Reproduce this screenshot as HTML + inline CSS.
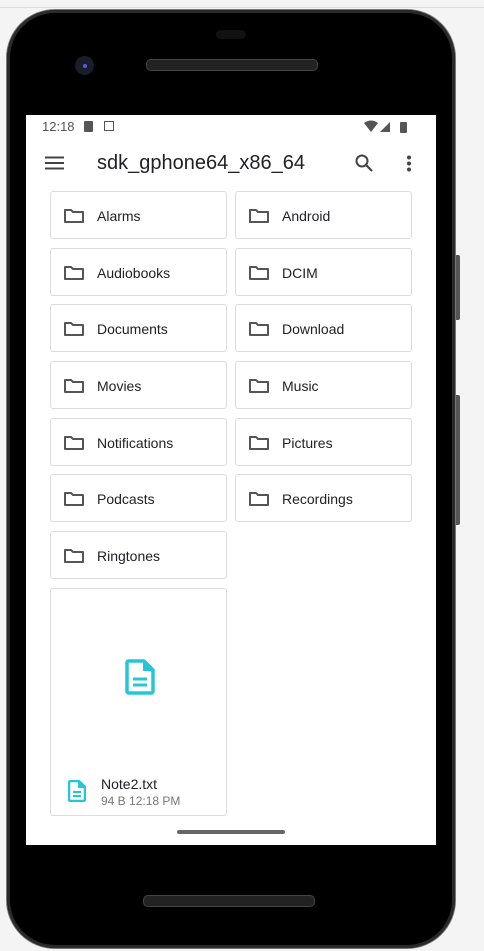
<!DOCTYPE html>
<html><head><style>
body{margin:0;width:484px;height:951px;background:#f4f4f4;position:relative;overflow:hidden;font-family:"Liberation Sans",sans-serif}
.abs{position:absolute}
.phone{left:7px;top:10px;width:448px;height:938px;background:#000;border-radius:48px;box-shadow:0 0 0 3px #2a2a2a inset, 0 0 0 1px #777}
.screen{left:26px;top:115px;width:410px;height:730px;background:#fff}
.card{position:absolute;width:175px;height:46px;border:1px solid #dcdcdc;border-radius:3px;background:#fff}
.card span{position:absolute;left:46px;top:16px;font-size:14px;color:#202124}
.card svg{position:absolute;left:13px;top:16px}
</style></head><body>
<div class="abs" style="left:0;top:0;width:484px;height:7px;border-bottom:1px solid #ddd;background:#f4f4f4"></div>
<div class="abs" style="left:454px;top:255px;width:6px;height:65px;background:#555;border-radius:2px"></div>
<div class="abs" style="left:454px;top:395px;width:6px;height:130px;background:#555;border-radius:2px"></div>
<div class="abs phone"></div>
<div class="abs" style="left:216px;top:30px;width:30px;height:9px;background:#111;border-radius:5px"></div>
<div class="abs" style="left:75px;top:56px;width:19px;height:19px;background:#1a1d2a;border-radius:50%"></div>
<div class="abs" style="left:83px;top:64px;width:4px;height:4px;background:#5060d0;border-radius:50%"></div>
<div class="abs" style="left:146px;top:59px;width:170px;height:10px;background:#222;border:1px solid #444;border-radius:5px"></div>
<div class="abs" style="left:143px;top:895px;width:170px;height:10px;background:#222;border:1px solid #444;border-radius:5px"></div>
<div class="abs screen"></div>
<div class="abs" style="left:42px;top:119px;font-size:13px;color:#555">12:18</div>
<div class="abs" style="left:84px;top:121px;width:9px;height:11px;background:#555;border-radius:1px"></div>
<div class="abs" style="left:104px;top:121px;width:10px;height:10px;border:1.5px solid #555;box-sizing:border-box"></div>
<svg class="abs" style="left:364px;top:120px" width="48" height="14"><path d="M0 3 Q7 -2 14 3 L7 12Z" fill="#555"/><path d="M16 12 L26 2 L26 12Z" fill="#555"/><rect x="36" y="2" width="7" height="11" fill="#555" rx="1"/></svg>
<svg class="abs" style="left:45px;top:156px" width="19" height="14"><path d="M0 1.5H19M0 7H19M0 12.5H19" stroke="#444" stroke-width="2"/></svg>
<div class="abs" style="left:97px;top:152px;font-size:20px;color:#202124">sdk_gphone64_x86_64</div>
<svg class="abs" style="left:354px;top:153px" width="20" height="20"><circle cx="8" cy="8" r="5.5" stroke="#444" stroke-width="2" fill="none"/><path d="M12 12L18 18" stroke="#444" stroke-width="2.2"/></svg>
<svg class="abs" style="left:406px;top:155px" width="6" height="18"><circle cx="3" cy="2.5" r="2" fill="#444"/><circle cx="3" cy="8.5" r="2" fill="#444"/><circle cx="3" cy="14.5" r="2" fill="#444"/></svg>

<div class="abs" style="left:0;top:0">
<div class="card" style="left:50px;top:191px"><svg width="20" height="16"><path d="M1 2V14H19V4H9L7 2Z" fill="none" stroke="#555" stroke-width="2" stroke-linejoin="round"/></svg><span>Alarms</span></div>
<div class="card" style="left:235px;top:191px"><svg width="20" height="16"><path d="M1 2V14H19V4H9L7 2Z" fill="none" stroke="#555" stroke-width="2" stroke-linejoin="round"/></svg><span>Android</span></div>
<div class="card" style="left:50px;top:248px"><svg width="20" height="16"><path d="M1 2V14H19V4H9L7 2Z" fill="none" stroke="#555" stroke-width="2" stroke-linejoin="round"/></svg><span>Audiobooks</span></div>
<div class="card" style="left:235px;top:248px"><svg width="20" height="16"><path d="M1 2V14H19V4H9L7 2Z" fill="none" stroke="#555" stroke-width="2" stroke-linejoin="round"/></svg><span>DCIM</span></div>
<div class="card" style="left:50px;top:304px"><svg width="20" height="16"><path d="M1 2V14H19V4H9L7 2Z" fill="none" stroke="#555" stroke-width="2" stroke-linejoin="round"/></svg><span>Documents</span></div>
<div class="card" style="left:235px;top:304px"><svg width="20" height="16"><path d="M1 2V14H19V4H9L7 2Z" fill="none" stroke="#555" stroke-width="2" stroke-linejoin="round"/></svg><span>Download</span></div>
<div class="card" style="left:50px;top:361px"><svg width="20" height="16"><path d="M1 2V14H19V4H9L7 2Z" fill="none" stroke="#555" stroke-width="2" stroke-linejoin="round"/></svg><span>Movies</span></div>
<div class="card" style="left:235px;top:361px"><svg width="20" height="16"><path d="M1 2V14H19V4H9L7 2Z" fill="none" stroke="#555" stroke-width="2" stroke-linejoin="round"/></svg><span>Music</span></div>
<div class="card" style="left:50px;top:418px"><svg width="20" height="16"><path d="M1 2V14H19V4H9L7 2Z" fill="none" stroke="#555" stroke-width="2" stroke-linejoin="round"/></svg><span>Notifications</span></div>
<div class="card" style="left:235px;top:418px"><svg width="20" height="16"><path d="M1 2V14H19V4H9L7 2Z" fill="none" stroke="#555" stroke-width="2" stroke-linejoin="round"/></svg><span>Pictures</span></div>
<div class="card" style="left:50px;top:474px"><svg width="20" height="16"><path d="M1 2V14H19V4H9L7 2Z" fill="none" stroke="#555" stroke-width="2" stroke-linejoin="round"/></svg><span>Podcasts</span></div>
<div class="card" style="left:235px;top:474px"><svg width="20" height="16"><path d="M1 2V14H19V4H9L7 2Z" fill="none" stroke="#555" stroke-width="2" stroke-linejoin="round"/></svg><span>Recordings</span></div>
<div class="card" style="left:50px;top:531px"><svg width="20" height="16"><path d="M1 2V14H19V4H9L7 2Z" fill="none" stroke="#555" stroke-width="2" stroke-linejoin="round"/></svg><span>Ringtones</span></div>
<div class="card" style="left:50px;top:588px;height:226px">
<svg style="left:74px;top:70px" width="30" height="36"><path d="M4 2H19L28 11V32Q28 34 26 34H4Q2 34 2 32V4Q2 2 4 2Z" fill="none" stroke="#26c6da" stroke-width="3.5" stroke-linejoin="round"/><path d="M18 2V12H28Z" fill="#26c6da"/><path d="M8 20H22M8 26H22" stroke="#26c6da" stroke-width="3"/></svg>
<svg style="left:17px;top:191px" width="18" height="22"><path d="M3 1H11L17 7V19Q17 21 15 21H3Q1 21 1 19V3Q1 1 3 1Z" fill="none" stroke="#26c6da" stroke-width="2.5" stroke-linejoin="round"/><path d="M10 1V8H17Z" fill="#26c6da"/><path d="M5 12H13M5 16H13" stroke="#26c6da" stroke-width="2"/></svg>
<span style="left:50px;top:187px;font-size:14px">Note2.txt</span>
<span style="left:50px;top:205px;font-size:12px;color:#777">94 B 12:18 PM</span>
</div>
</div>
<div class="abs" style="left:177px;top:830px;width:108px;height:4px;background:#666;border-radius:2px"></div>
</body></html>
